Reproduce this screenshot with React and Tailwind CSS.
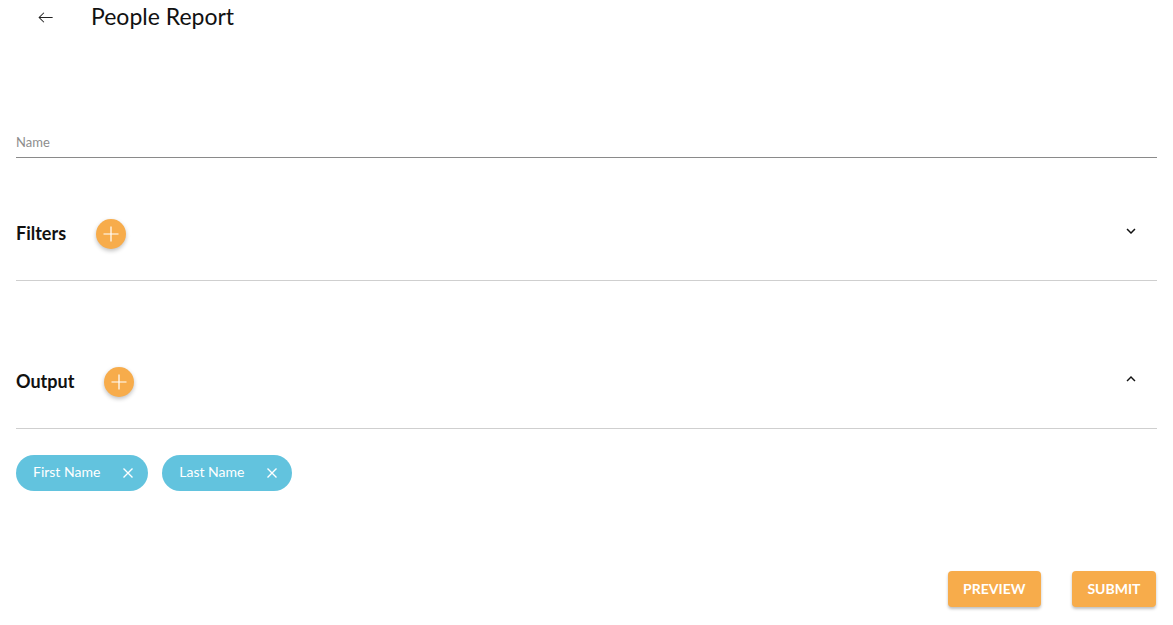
import React from "react";

const Plus = () => (
  <button className="ml-[30px] w-[30px] h-[30px] rounded-full bg-[#f7ac4b] shadow-[0_2px_4px_rgba(0,0,0,0.25)] flex items-center justify-center">
    <svg width="18" height="18" viewBox="0 0 18 18">
      <path d="M9 1.5V16.5M1.5 9H16.5" stroke="white" strokeWidth="1.2" />
    </svg>
  </button>
);

const Chevron = ({ up }) => (
  <svg width="18" height="18" viewBox="0 0 24 24" className="mr-[17px] -mt-[6px]">
    {up ? (
      <path d="M12 8l-6 6 1.41 1.41L12 10.83l4.59 4.58L18 14z" fill="#111" />
    ) : (
      <path d="M16.59 8.59L12 13.17 7.41 8.59 6 10l6 6 6-6z" fill="#111" />
    )}
  </svg>
);

const Chip = ({ label }) => (
  <div className="h-[36px] rounded-full bg-[#62c3de] flex items-center pl-[17px] pr-[14px] text-white text-[14px] leading-[16px]">
    <span className="-mt-[2px]">{label}</span>
    <svg width="12" height="12" viewBox="0 0 12 12" className="ml-[22px]">
      <path d="M1.5 1.5L10.5 10.5M10.5 1.5L1.5 10.5" stroke="white" strokeWidth="1.4" />
    </svg>
  </div>
);

export default function App() {
  return (
    <div className="w-[1173px] h-[625px] bg-white text-[#111] font-['Lato','Noto_Sans',sans-serif] px-4">
      <div className="h-[34px] flex items-center">
        <svg width="19" height="19" viewBox="0 0 24 24" className="ml-[20px]">
          <path d="M21 12H4M10 6l-6 6 6 6" stroke="#222" strokeWidth="1.3" fill="none" />
        </svg>
        <h1 className="ml-[36px] text-[23px] text-[#111] leading-none -mt-[2px]">People Report</h1>
      </div>

      <div className="mt-[100px] border-b border-[#8a8a8a] pb-[7px]">
        <div className="text-[13px] leading-[16px] text-[#8d8d8d]">Name</div>
      </div>

      <div className="mt-[59px] border-b border-[#cfcfcf] pb-[29px]">
        <div className="h-[34px] flex items-center">
          <span className="text-[18px] font-bold -mt-[2px]">Filters</span>
          <Plus />
          <div className="flex-1" />
          <Chevron />
        </div>
      </div>

      <div className="mt-[84px] border-b border-[#cfcfcf] pb-[29px]">
        <div className="h-[34px] flex items-center">
          <span className="text-[18px] font-bold -mt-[2px]">Output</span>
          <Plus />
          <div className="flex-1" />
          <Chevron up />
        </div>
      </div>

      <div className="mt-[26px] flex gap-[14px]">
        <Chip label="First Name" />
        <Chip label="Last Name" />
      </div>

      <div className="mt-[80px] flex justify-end gap-[31px] pr-[1px]">
        <button className="h-[36px] px-[15.5px] pb-[2px] rounded bg-[#f7ac4b] text-white text-[14px] font-bold shadow-[0_2px_3px_rgba(0,0,0,0.25)]">PREVIEW</button>
        <button className="h-[36px] px-[15.5px] pb-[2px] rounded bg-[#f7ac4b] text-white text-[14px] font-bold shadow-[0_2px_3px_rgba(0,0,0,0.25)]">SUBMIT</button>
      </div>
    </div>
  );
}
